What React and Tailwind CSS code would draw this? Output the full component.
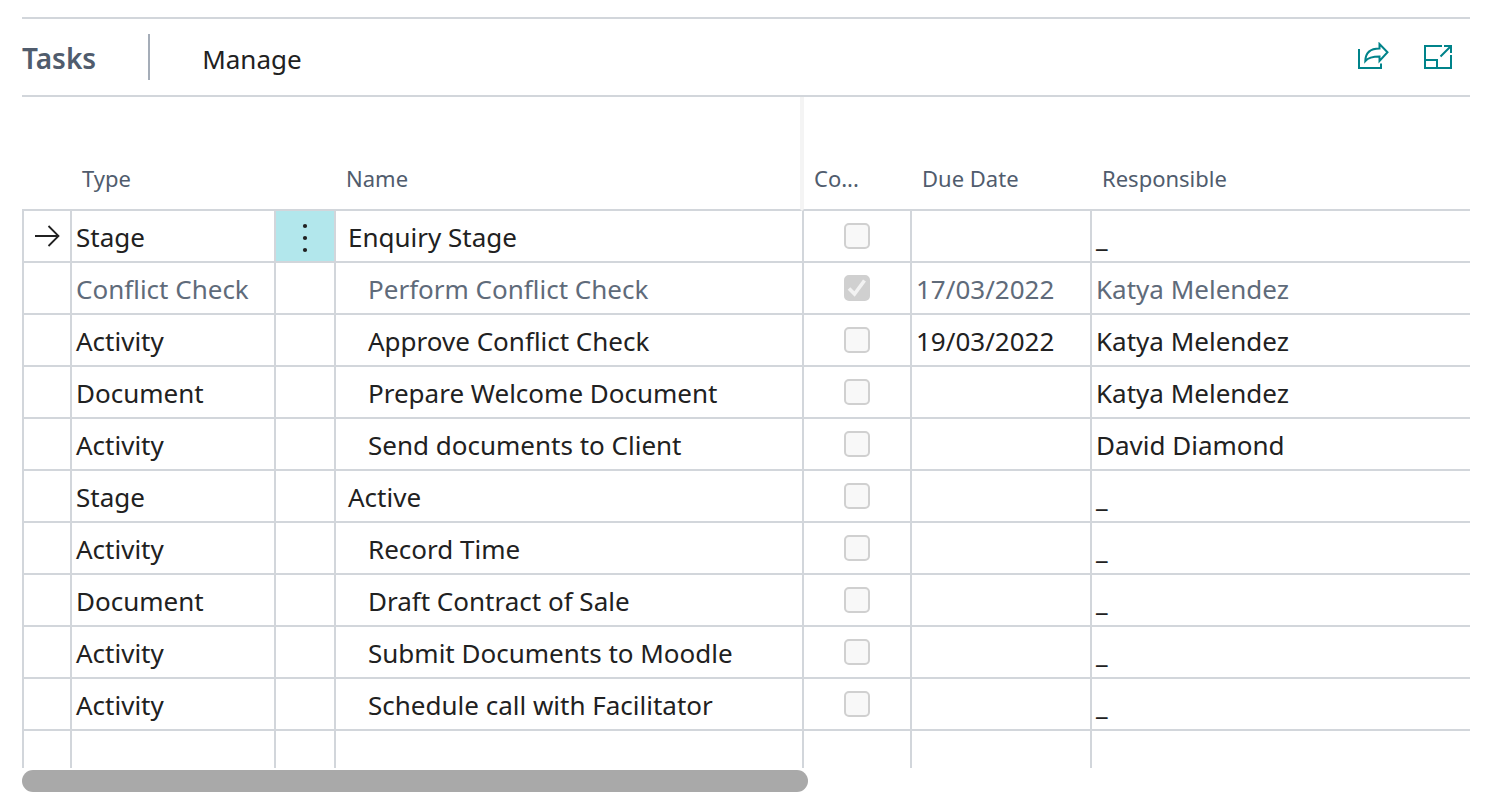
import { clsx } from 'clsx';

const tasks = [
    { type: 'Stage', name: 'Enquiry Stage', responsible: '_', stage: true, current: true },
    { type: 'Conflict Check', name: 'Perform Conflict Check', done: true, dueDate: '17/03/2022', responsible: 'Katya Melendez' },
    { type: 'Activity', name: 'Approve Conflict Check', dueDate: '19/03/2022', responsible: 'Katya Melendez' },
    { type: 'Document', name: 'Prepare Welcome Document', responsible: 'Katya Melendez' },
    { type: 'Activity', name: 'Send documents to Client', responsible: 'David Diamond' },
    { type: 'Stage', name: 'Active', responsible: '_', stage: true },
    { type: 'Activity', name: 'Record Time', responsible: '_' },
    { type: 'Document', name: 'Draft Contract of Sale', responsible: '_' },
    { type: 'Activity', name: 'Submit Documents to Moodle', responsible: '_' },
    { type: 'Activity', name: 'Schedule call with Facilitator', responsible: '_' },
];

const cell = 'h-[52px] border-l-2 border-b-2 border-[#d2d6db] align-middle';
const textCell = 'pt-0.5 pl-1';
const emptyCell = 'h-[37px] border-l-2 border-[#d2d6db] p-0';
const heading = 'border-b-2 border-b-[#d2d6db] pb-[17px] align-bottom font-normal';

function ShareIcon() {
    return (
        <svg width="36" height="30" viewBox="0 0 36 30" fill="none" stroke="#00838a" strokeWidth="2" aria-hidden="true">
            <path d="M3 7v19h22v-4.500" />
            <path d="M23.500 2v4.500C14.500 6.500 9.500 11 9.300 19c3-3.500 7.500-4.500 14.200-4.500V19L31.500 10.300z" />
        </svg>
    );
}

function ExpandIcon() {
    return (
        <svg width="30" height="30" viewBox="0 0 30 30" fill="none" stroke="#00838a" strokeWidth="2" aria-hidden="true">
            <path d="M18 4H1v22h26V13" />
            <path d="M1 18h12v8" />
            <path d="M20 4h7v7M27 4L16.500 14.500" />
        </svg>
    );
}

function ArrowIcon() {
    return (
        <svg width="26" height="22" viewBox="0 0 26 22" fill="none" stroke="#212121" strokeWidth="1.8" aria-hidden="true">
            <path d="M1 11h24M14.500 1l10 10-10 10" />
        </svg>
    );
}

function TaskRow({ task }) {
    return (
        <tr className={task.done ? 'text-[#5f6b7a]' : 'text-[#212121]'}>
            <td className={clsx(cell, 'pl-[10px]')}>{task.current && <ArrowIcon />}</td>
            <td className={clsx(cell, textCell)}>{task.type}</td>
            <td className={clsx(cell, task.current && 'bg-[#b2e7ec]')}>
                {task.current && (
                    <button type="button" aria-label="Show more options" className="flex h-[50px] w-full items-center justify-center pt-1">
                        <svg width="6" height="30" viewBox="0 0 6 30" fill="#212121" aria-hidden="true">
                            <circle cx="3" cy="3" r="2.1" />
                            <circle cx="3" cy="15" r="2.1" />
                            <circle cx="3" cy="27" r="2.1" />
                        </svg>
                    </button>
                )}
            </td>
            <td className={clsx(cell, 'pt-0.5', task.stage ? 'pl-3' : 'pl-8')}>{task.name}</td>
            <td className={cell}>
                <span className="flex items-center justify-center">
                    <span className="grid">
                        <input
                            type="checkbox"
                            disabled
                            defaultChecked={task.done}
                            aria-label={`Completed: ${task.name}`}
                            className="col-start-1 row-start-1 size-[26px] appearance-none rounded-[5px] border-2 border-[#d0d0d0] bg-[#f8f8f8] checked:bg-[#d0d0d0]"
                        />
                        {task.done && (
                            <svg className="col-start-1 row-start-1" width="26" height="26" viewBox="0 0 26 26" fill="none" stroke="#f2f2f2" strokeWidth="3.6" aria-hidden="true">
                                <path d="M5 13.500l5.500 5.500L20.500 5.500" />
                            </svg>
                        )}
                    </span>
                </span>
            </td>
            <td className={clsx(cell, textCell)}>{task.dueDate}</td>
            <td className={clsx(cell, textCell)}>{task.responsible}</td>
        </tr>
    );
}

export default function App() {
    return (
        <main className="bg-white pt-[17px] pr-8 pl-[22px] font-['Noto_Sans','Open_Sans',sans-serif]">
            <header className="flex h-20 items-center border-y-2 border-[#d2d6db]">
                <h2 className="pt-0.5 text-[28px] leading-9 font-semibold text-[#505c6d]">Tasks</h2>
                <div className="ml-[52px] h-[46px] w-0.5 bg-[#a5adb8]" />
                <button type="button" className="ml-[52px] pt-1 text-[26px] leading-9 text-[#212121]">Manage</button>
                <div className="ml-auto flex items-center gap-8 pr-4">
                    <button type="button" aria-label="Share"><ShareIcon /></button>
                    <button type="button" aria-label="Expand"><ExpandIcon /></button>
                </div>
            </header>

            <table className="w-full table-fixed border-separate border-spacing-0 text-left text-[26px] leading-9 whitespace-nowrap">
                <colgroup>
                    <col className="w-12" />
                    <col className="w-[204px]" />
                    <col className="w-[60px]" />
                    <col className="w-[468px]" />
                    <col className="w-[108px]" />
                    <col className="w-[180px]" />
                    <col />
                </colgroup>
                <thead>
                    <tr className="h-[114px] text-[22px] leading-7 text-[#505c6d]">
                        <td className={heading} />
                        <th scope="col" className={clsx(heading, 'pl-3')}>Type</th>
                        <td className={heading} />
                        <th scope="col" className={clsx(heading, 'border-r-2 border-r-[#f4f4f4] pl-3')}>Name</th>
                        <th scope="col" className={clsx(heading, 'border-l-2 border-l-[#f4f4f4] pl-[10px]')}>Co...</th>
                        <th scope="col" className={clsx(heading, 'pl-3')}>Due Date</th>
                        <th scope="col" className={clsx(heading, 'pl-3')}>Responsible</th>
                    </tr>
                </thead>
                <tbody>
                    {tasks.map((task, idx) => <TaskRow key={idx} task={task} />)}
                    <tr>
                        <td className={emptyCell} />
                        <td className={emptyCell} />
                        <td className={emptyCell} />
                        <td className={emptyCell} />
                        <td className={emptyCell} />
                        <td className={emptyCell} />
                        <td className={emptyCell} />
                    </tr>
                </tbody>
            </table>

            {/* Horizontal scrollbar */}
            <div className="mt-0.5 mb-4">
                <div className="h-[22px] w-[54.3%] rounded-full bg-[#a9a9a9]" />
            </div>
        </main>
    );
}
